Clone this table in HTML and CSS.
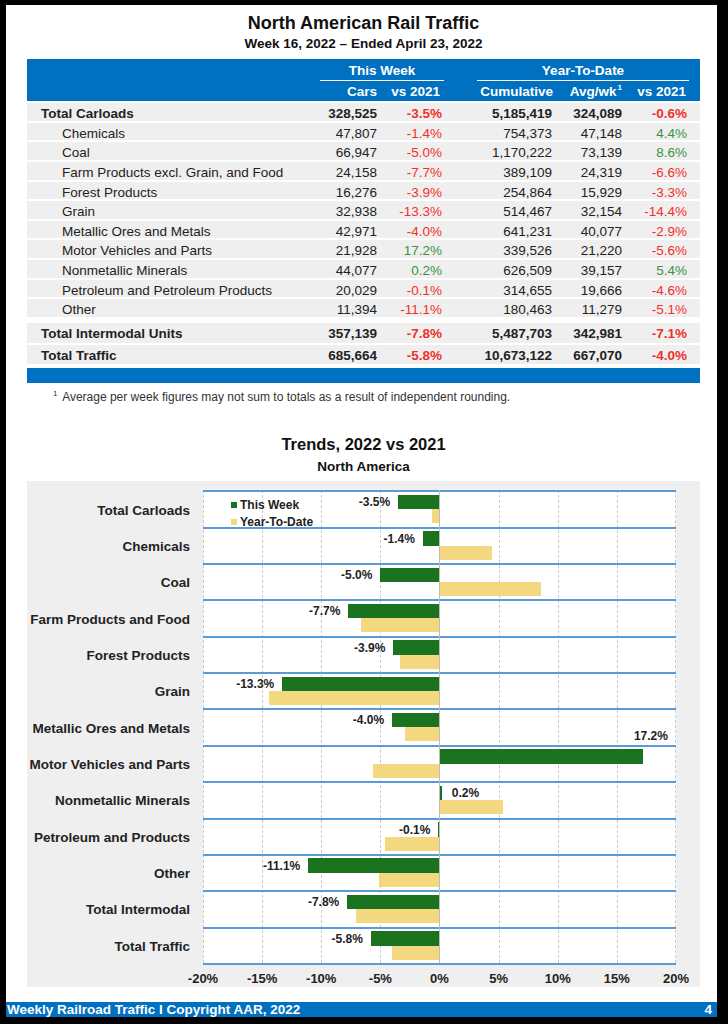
FILE: index.html
```html
<!DOCTYPE html>
<html lang="en">
<head>
<meta charset="utf-8">
<title>North American Rail Traffic</title>
<link rel="stylesheet" href="styles.css">
</head>
<body>
<div class="page">
  <div class="content">
    <header class="doc-head">
      <h1>North American Rail Traffic</h1>
      <h2>Week 16, 2022 – Ended April 23, 2022</h2>
    </header>

    <section class="traffic">
      <div class="thead">
        <div class="hrow hrow-1">
          <div class="grp grp-week">This Week</div>
          <div class="grp grp-ytd">Year-To-Date</div>
        </div>
        <div class="hrow hrow-2">
          <div class="c1">Cars</div>
          <div class="c2">vs 2021</div>
          <div class="c3">Cumulative</div>
          <div class="c4">Avg/wk<sup>1</sup></div>
          <div class="c5">vs 2021</div>
        </div>
      </div>
      <div class="tbody">
        <div class="trow total"><div class="lbl">Total Carloads</div><div class="c1">328,525</div><div class="c2 neg">-3.5%</div><div class="c3">5,185,419</div><div class="c4">324,089</div><div class="c5 neg">-0.6%</div></div>
        <div class="trow sub"><div class="lbl">Chemicals</div><div class="c1">47,807</div><div class="c2 neg">-1.4%</div><div class="c3">754,373</div><div class="c4">47,148</div><div class="c5 pos">4.4%</div></div>
        <div class="trow sub"><div class="lbl">Coal</div><div class="c1">66,947</div><div class="c2 neg">-5.0%</div><div class="c3">1,170,222</div><div class="c4">73,139</div><div class="c5 pos">8.6%</div></div>
        <div class="trow sub"><div class="lbl">Farm Products excl. Grain, and Food</div><div class="c1">24,158</div><div class="c2 neg">-7.7%</div><div class="c3">389,109</div><div class="c4">24,319</div><div class="c5 neg">-6.6%</div></div>
        <div class="trow sub"><div class="lbl">Forest Products</div><div class="c1">16,276</div><div class="c2 neg">-3.9%</div><div class="c3">254,864</div><div class="c4">15,929</div><div class="c5 neg">-3.3%</div></div>
        <div class="trow sub"><div class="lbl">Grain</div><div class="c1">32,938</div><div class="c2 neg">-13.3%</div><div class="c3">514,467</div><div class="c4">32,154</div><div class="c5 neg">-14.4%</div></div>
        <div class="trow sub"><div class="lbl">Metallic Ores and Metals</div><div class="c1">42,971</div><div class="c2 neg">-4.0%</div><div class="c3">641,231</div><div class="c4">40,077</div><div class="c5 neg">-2.9%</div></div>
        <div class="trow sub"><div class="lbl">Motor Vehicles and Parts</div><div class="c1">21,928</div><div class="c2 pos">17.2%</div><div class="c3">339,526</div><div class="c4">21,220</div><div class="c5 neg">-5.6%</div></div>
        <div class="trow sub"><div class="lbl">Nonmetallic Minerals</div><div class="c1">44,077</div><div class="c2 pos">0.2%</div><div class="c3">626,509</div><div class="c4">39,157</div><div class="c5 pos">5.4%</div></div>
        <div class="trow sub"><div class="lbl">Petroleum and Petroleum Products</div><div class="c1">20,029</div><div class="c2 neg">-0.1%</div><div class="c3">314,655</div><div class="c4">19,666</div><div class="c5 neg">-4.6%</div></div>
        <div class="trow sub"><div class="lbl">Other</div><div class="c1">11,394</div><div class="c2 neg">-11.1%</div><div class="c3">180,463</div><div class="c4">11,279</div><div class="c5 neg">-5.1%</div></div>
        <div class="trow total sum sum-first"><div class="lbl">Total Intermodal Units</div><div class="c1">357,139</div><div class="c2 neg">-7.8%</div><div class="c3">5,487,703</div><div class="c4">342,981</div><div class="c5 neg">-7.1%</div></div>
        <div class="trow total sum sum-last"><div class="lbl">Total Traffic</div><div class="c1">685,664</div><div class="c2 neg">-5.8%</div><div class="c3">10,673,122</div><div class="c4">667,070</div><div class="c5 neg">-4.0%</div></div>
      </div>
      <div class="tfoot-bar"></div>
    </section>

    <p class="footnote"><sup>1</sup> Average per week figures may not sum to totals as a result of independent rounding.</p>

    <section class="trends">
      <h3>Trends, 2022 vs 2021</h3>
      <h4>North America</h4>
      <div class="chart">
        <div class="cats">
          <div class="cat">Total Carloads</div>
          <div class="cat">Chemicals</div>
          <div class="cat">Coal</div>
          <div class="cat">Farm Products and Food</div>
          <div class="cat">Forest Products</div>
          <div class="cat">Grain</div>
          <div class="cat">Metallic Ores and Metals</div>
          <div class="cat">Motor Vehicles and Parts</div>
          <div class="cat">Nonmetallic Minerals</div>
          <div class="cat">Petroleum and Products</div>
          <div class="cat">Other</div>
          <div class="cat">Total Intermodal</div>
          <div class="cat">Total Traffic</div>
        </div>
        <div class="plot">
          <div class="gl" style="left:0%"></div>
          <div class="gl" style="left:12.5%"></div>
          <div class="gl" style="left:25%"></div>
          <div class="gl" style="left:37.5%"></div>
          <div class="gl" style="left:62.5%"></div>
          <div class="gl" style="left:75%"></div>
          <div class="gl" style="left:87.5%"></div>
          <div class="gl gl-end"></div>

          <div class="prow"><div class="bar week" style="left:41.25%;width:8.75%"></div><div class="bar ytd" style="left:48.5%;width:1.5%"></div><span class="val" style="right:calc(58.75% + 8px)">-3.5%</span></div>
          <div class="prow"><div class="bar week" style="left:46.5%;width:3.5%"></div><div class="bar ytd" style="left:50%;width:11%"></div><span class="val" style="right:calc(53.5% + 8px)">-1.4%</span></div>
          <div class="prow"><div class="bar week" style="left:37.5%;width:12.5%"></div><div class="bar ytd" style="left:50%;width:21.5%"></div><span class="val" style="right:calc(62.5% + 8px)">-5.0%</span></div>
          <div class="prow"><div class="bar week" style="left:30.75%;width:19.25%"></div><div class="bar ytd" style="left:33.5%;width:16.5%"></div><span class="val" style="right:calc(69.25% + 8px)">-7.7%</span></div>
          <div class="prow"><div class="bar week" style="left:40.25%;width:9.75%"></div><div class="bar ytd" style="left:41.75%;width:8.25%"></div><span class="val" style="right:calc(59.75% + 8px)">-3.9%</span></div>
          <div class="prow"><div class="bar week" style="left:16.75%;width:33.25%"></div><div class="bar ytd" style="left:14%;width:36%"></div><span class="val" style="right:calc(83.25% + 8px)">-13.3%</span></div>
          <div class="prow"><div class="bar week" style="left:40%;width:10%"></div><div class="bar ytd" style="left:42.75%;width:7.25%"></div><span class="val" style="right:calc(60% + 8px)">-4.0%</span></div>
          <div class="prow"><div class="bar week" style="left:50%;width:43%"></div><div class="bar ytd" style="left:36%;width:14%"></div><span class="val val-above" style="left:calc(93% - 9px)">17.2%</span></div>
          <div class="prow"><div class="bar week" style="left:50%;width:0.5%"></div><div class="bar ytd" style="left:50%;width:13.5%"></div><span class="val" style="left:calc(50.5% + 10px)">0.2%</span></div>
          <div class="prow"><div class="bar week" style="left:49.75%;width:0.25%"></div><div class="bar ytd" style="left:38.5%;width:11.5%"></div><span class="val" style="right:calc(50.25% + 8px)">-0.1%</span></div>
          <div class="prow"><div class="bar week" style="left:22.25%;width:27.75%"></div><div class="bar ytd" style="left:37.25%;width:12.75%"></div><span class="val" style="right:calc(77.75% + 8px)">-11.1%</span></div>
          <div class="prow"><div class="bar week" style="left:30.5%;width:19.5%"></div><div class="bar ytd" style="left:32.25%;width:17.75%"></div><span class="val" style="right:calc(69.5% + 8px)">-7.8%</span></div>
          <div class="prow"><div class="bar week" style="left:35.5%;width:14.5%"></div><div class="bar ytd" style="left:40%;width:10%"></div><span class="val" style="right:calc(64.5% + 8px)">-5.8%</span></div>

          <div class="zero"></div>
          <div class="legend">
            <div class="lg"><span class="sw sw-week"></span>This Week</div>
            <div class="lg"><span class="sw sw-ytd"></span>Year-To-Date</div>
          </div>
        </div>
        <div class="axis">
          <span>-20%</span><span>-15%</span><span>-10%</span><span>-5%</span><span>0%</span><span>5%</span><span>10%</span><span>15%</span><span>20%</span>
        </div>
      </div>
    </section>
  </div>

  <footer class="doc-foot">
    <span>Weekly Railroad Traffic I Copyright AAR, 2022</span>
    <span>4</span>
  </footer>
</div>
</body>
</html>
```

FILE: styles.css
```css
* { box-sizing: border-box; }

html, body { margin: 0; }

body {
  width: 728px;
  height: 1024px;
  overflow: hidden;
  background: #000;
  padding: 5px 0 0 6px;
  font-family: "Liberation Sans", Arial, Helvetica, sans-serif;
  color: #222;
}

.page {
  width: 711px;
  height: 1012px;
  background: #fff;
  display: flex;
  flex-direction: column;
}

.content {
  padding: 0 17px 0 21px;
}

/* ---------- header ---------- */
.doc-head {
  padding-top: 6.5px;
  text-align: center;
  color: #111;
}
.doc-head h1 {
  margin: 0;
  font-size: 18px;
  line-height: 22px;
  font-weight: bold;
}
.doc-head h2 {
  margin: 1px 0 0;
  font-size: 13.5px;
  line-height: 17px;
  font-weight: bold;
}

/* ---------- table ---------- */
.traffic {
  margin-top: 7.5px;
  font-size: 13.5px;
}

.hrow,
.trow {
  display: grid;
  grid-template-columns: 293px 62px 62px 33px 80px 70px 62px 11px;
}

.thead {
  background: #0070C0;
  color: #fff;
  font-weight: bold;
  height: 42px;
}

.hrow-1 { height: 22px; }
.grp {
  text-align: center;
  border-bottom: 1px solid #fff;
  padding-top: 2px;
  line-height: 19px;
  height: 22px;
}
.grp-week { grid-column: 2 / 4; }
.grp-ytd { grid-column: 5 / 8; }

.hrow-2 { height: 20px; line-height: 20px; padding-top: 1px; }

.c1, .c2, .c3, .c4, .c5 { text-align: right; white-space: nowrap; }
.c1 { grid-column: 2; padding-right: 5px; }
.c2 { grid-column: 3; padding-right: 2px; }
.c3 { grid-column: 5; padding-right: 5px; }
.c4 { grid-column: 6; padding-right: 5px; }
.c5 { grid-column: 7; padding-right: 2px; }

.hrow-2 .c2 { padding-right: 4px; }
.hrow-2 .c3 { padding-right: 4px; }
.hrow-2 .c5 { padding-right: 3px; }

.hrow-2 sup {
  font-size: 8px;
  line-height: 0;
  vertical-align: 6px;
  margin-left: 1px;
}

.tbody {
  display: flex;
  flex-direction: column;
  gap: 2px;
  padding-top: 2.3px;
}

.trow {
  background: #EFEFEF;
  height: 17.6px;
  line-height: 22.4px;
}
.trow .lbl { grid-column: 1; padding-left: 35px; white-space: nowrap; }
.trow.total { font-weight: bold; }
.trow.total .lbl { padding-left: 14px; }
.trow.sum { height: 20px; line-height: 21.6px; }
.trow.sum-first { margin-top: 3.8px; }
.trow.sum-last { margin-top: 0.3px; height: 19.3px; }

.neg { color: #F2302B; }
.pos { color: #3A933E; }

.tfoot-bar {
  margin-top: 3.4px;
  height: 15.3px;
  background: #0070C0;
}

.footnote {
  margin: 7px 0 0;
  padding-left: 26px;
  font-size: 12px;
  line-height: 14px;
  color: #333;
}
.footnote sup {
  font-size: 8px;
  line-height: 0;
  vertical-align: 5px;
  margin-right: 2px;
}

/* ---------- chart ---------- */
.trends h3 {
  margin: 30px 0 0;
  text-align: center;
  font-size: 16.5px;
  line-height: 20px;
  color: #111;
}
.trends h4 {
  margin: 5px 0 0;
  text-align: center;
  font-size: 13.5px;
  line-height: 16px;
  color: #111;
}

.chart {
  margin-top: 6px;
  background: #EFEFEF;
  height: 506px;
  padding-top: 9.5px;
  display: grid;
  grid-template-columns: 176px 473px;
  grid-template-rows: auto auto;
  align-content: start;
}

.cats {
  display: flex;
  flex-direction: column;
}
.cat {
  height: 36.35px;
  padding: 3px 13px 0 0;
  display: flex;
  align-items: center;
  justify-content: flex-end;
  font-weight: bold;
  font-size: 13.5px;
  white-space: nowrap;
  color: #222;
}

.plot {
  position: relative;
  background: #fff;
  border-bottom: 2px solid #5B9BD5;
}

.gl {
  position: absolute;
  top: 0;
  bottom: 0;
  width: 0;
  border-left: 1px dashed #CACACA;
}
.gl-end { left: auto; right: 0; }

.prow {
  position: relative;
  height: 36.35px;
  border-top: 2px solid #5B9BD5;
}

.bar {
  position: absolute;
}
.bar.week {
  top: 2.5px;
  height: 14.5px;
  background: #1B7320;
}
.bar.ytd {
  top: 17px;
  height: 14px;
  background: #F3D880;
}

.val {
  position: absolute;
  top: 3px;
  line-height: 15px;
  font-size: 12px;
  font-weight: bold;
  color: #222;
  white-space: nowrap;
  z-index: 3;
}
.val-above { top: -18px; }

.zero {
  position: absolute;
  top: 0;
  bottom: 0;
  left: calc(50% - 0.75px);
  width: 1.5px;
  background: #BDBDBD;
  z-index: 2;
}

.legend {
  position: absolute;
  left: 28px;
  top: 6.5px;
  z-index: 3;
  font-size: 12px;
  font-weight: bold;
  line-height: 17px;
  color: #222;
}
.lg { display: flex; align-items: center; white-space: nowrap; }
.sw {
  display: inline-block;
  width: 6px;
  height: 6px;
  margin-right: 3px;
}
.sw-week { background: #1B7320; }
.sw-ytd { background: #F3D880; }

.axis {
  grid-column: 2;
  margin-left: -29.56px;
  width: 532.1px;
  display: grid;
  grid-template-columns: repeat(9, 1fr);
  padding-top: 3px;
  line-height: 22px;
  font-size: 13px;
  font-weight: bold;
  text-align: center;
  color: #222;
}

/* ---------- footer ---------- */
.doc-foot {
  margin-top: auto;
  height: 15px;
  background: #0070C0;
  color: #fff;
  font-weight: bold;
  font-size: 13.5px;
  line-height: 15px;
  display: flex;
  justify-content: space-between;
  padding: 0 5px 0 1px;
  white-space: nowrap;
}
```
